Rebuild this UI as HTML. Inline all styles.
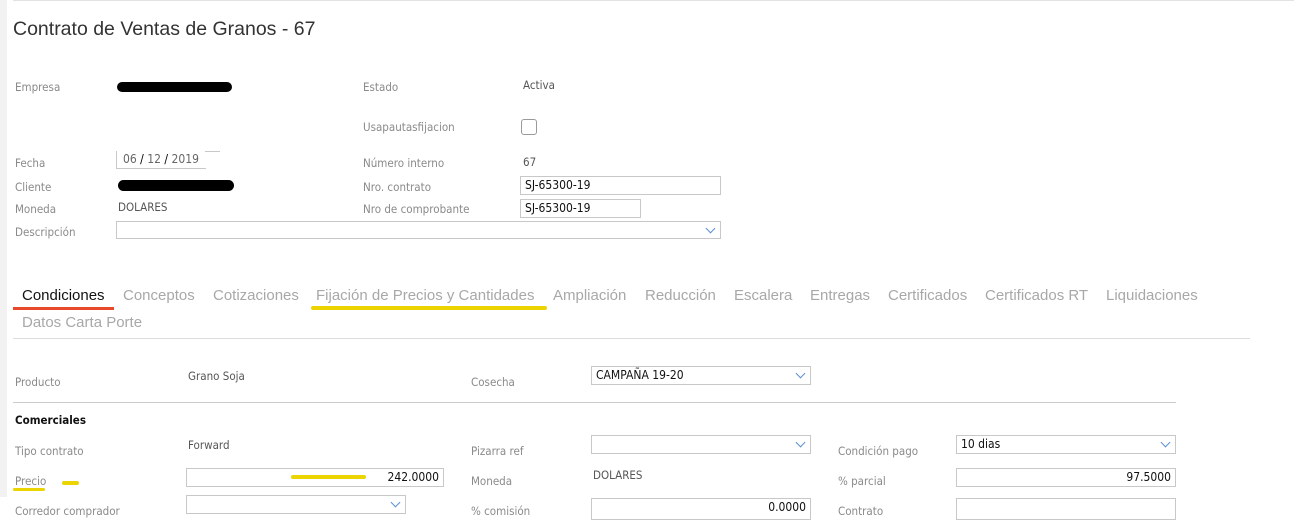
<!DOCTYPE html>
<html><head><meta charset="utf-8"><style>
*{margin:0;padding:0;box-sizing:border-box}
body{width:1294px;height:516px;overflow:hidden;background:#fff;position:relative;font-family:"DejaVu Sans Condensed","DejaVu Sans","Liberation Sans",sans-serif}
.a{position:absolute;white-space:nowrap}
.l{position:absolute;font-size:11.5px;color:#8a8a8a;white-space:nowrap}
.v{position:absolute;font-size:11.5px;color:#555;white-space:nowrap}
.i{position:absolute;border:1px solid #c8c8c8;background:#fff;font-size:12px;color:#111;padding:0 4px;line-height:16px}
.r{text-align:right}
.s::after{content:"";position:absolute;right:6px;top:3px;width:6px;height:6px;border-right:1px solid #5b8fd6;border-bottom:1px solid #5b8fd6;transform:rotate(45deg)}
.t{position:absolute;font-family:"Liberation Sans",sans-serif;font-size:15px;color:#a8a8a8;white-space:nowrap}
.blk{position:absolute;background:#000;border-radius:6px}
.y{position:absolute;background:#ecd400;border-radius:3px}
</style></head><body>
<div class="a" style="left:0;top:0;width:7px;height:497px;background:#f2f2f2"></div>
<div class="a" style="left:13px;top:0;width:1281px;height:1px;background:#e2e2e2"></div>
<div class="a" style="left:13px;top:18px;font-family:'Liberation Sans',sans-serif;font-size:19.5px;color:#333">Contrato de Ventas de Granos - 67</div>

<div class="l" style="left:15px;top:80px">Empresa</div>
<div class="blk" style="left:117px;top:82px;width:115px;height:10px"></div>
<div class="l" style="left:363px;top:80px">Estado</div>
<div class="v" style="left:523px;top:78px">Activa</div>
<div class="l" style="left:363px;top:120px">Usapautasfijacion</div>
<div class="a" style="left:521px;top:119px;width:16px;height:16px;border:1px solid #999;border-radius:3px"></div>
<div class="l" style="left:15px;top:156px">Fecha</div>
<div class="a" style="left:116px;top:151px;width:90px;height:18px;border-left:1px solid #c8c8c8;border-bottom:1px solid #c8c8c8;font-size:12px;color:#666;padding:1px 6px">06 <span style="color:#000">/</span> 12 <span style="color:#000">/</span> 2019</div>
<div class="a" style="left:205px;top:151px;width:15px;height:1px;background:#c8c8c8"></div>
<div class="l" style="left:363px;top:156px">Número interno</div>
<div class="v" style="left:523px;top:155px">67</div>
<div class="l" style="left:15px;top:180px">Cliente</div>
<div class="blk" style="left:118px;top:180px;width:116px;height:11px"></div>
<div class="l" style="left:363px;top:180px">Nro. contrato</div>
<div class="i" style="left:520px;top:176px;width:201px;height:19px">SJ-65300-19</div>
<div class="l" style="left:15px;top:202px">Moneda</div>
<div class="v" style="left:118px;top:200px">DOLARES</div>
<div class="l" style="left:363px;top:202px">Nro de comprobante</div>
<div class="i" style="left:520px;top:199px;width:121px;height:19px">SJ-65300-19</div>
<div class="l" style="left:15px;top:225px">Descripción</div>
<div class="i s" style="left:116px;top:221px;width:605px;height:18px"></div>

<div class="t" style="left:22px;top:287px;color:#111">Condiciones</div>
<div class="a" style="left:13px;top:307px;width:101px;height:3px;background:#e8492b"></div>
<div class="t" style="left:123px;top:287px">Conceptos</div>
<div class="t" style="left:213px;top:287px">Cotizaciones</div>
<div class="t" style="left:316px;top:287px">Fijación de Precios y Cantidades</div>
<div class="y" style="left:311px;top:306px;width:236px;height:4px"></div>
<div class="t" style="left:553px;top:287px">Ampliación</div>
<div class="t" style="left:645px;top:287px">Reducción</div>
<div class="t" style="left:734px;top:287px">Escalera</div>
<div class="t" style="left:810px;top:287px">Entregas</div>
<div class="t" style="left:888px;top:287px">Certificados</div>
<div class="t" style="left:985px;top:287px">Certificados RT</div>
<div class="t" style="left:1106px;top:287px">Liquidaciones</div>
<div class="t" style="left:22px;top:314px">Datos Carta Porte</div>
<div class="a" style="left:13px;top:338px;width:1237px;height:1px;background:#ddd"></div>

<div class="l" style="left:15px;top:375px">Producto</div>
<div class="v" style="left:188px;top:369px">Grano Soja</div>
<div class="l" style="left:471px;top:375px">Cosecha</div>
<div class="i s" style="left:591px;top:366px;width:220px;height:19px">CAMPAÑA 19-20</div>
<div class="a" style="left:13px;top:402px;width:1163px;height:1px;background:#ccc"></div>
<div class="a" style="left:15px;top:413px;font-size:11.5px;font-weight:bold;color:#111">Comerciales</div>

<div class="l" style="left:15px;top:444px">Tipo contrato</div>
<div class="v" style="left:188px;top:438px">Forward</div>
<div class="l" style="left:471px;top:444px">Pizarra ref</div>
<div class="i s" style="left:591px;top:435px;width:220px;height:19px"></div>
<div class="l" style="left:838px;top:444px">Condición pago</div>
<div class="i s" style="left:956px;top:435px;width:220px;height:19px">10 dias</div>

<div class="l" style="left:15px;top:474px">Precio</div>
<div class="y" style="left:13px;top:488px;width:32px;height:3px"></div>
<div class="y" style="left:62px;top:481px;width:17px;height:4px"></div>
<div class="i r" style="left:186px;top:468px;width:258px;height:19px">242.0000</div>
<div class="y" style="left:291px;top:475px;width:75px;height:4px"></div>
<div class="l" style="left:471px;top:474px">Moneda</div>
<div class="v" style="left:593px;top:468px">DOLARES</div>
<div class="l" style="left:838px;top:474px">% parcial</div>
<div class="i r" style="left:956px;top:468px;width:220px;height:19px">97.5000</div>

<div class="l" style="left:15px;top:504px">Corredor comprador</div>
<div class="i s" style="left:186px;top:495px;width:220px;height:19px"></div>
<div class="l" style="left:471px;top:504px">% comisión</div>
<div class="i r" style="left:591px;top:498px;width:220px;height:22px">0.0000</div>
<div class="l" style="left:838px;top:504px">Contrato</div>
<div class="i" style="left:956px;top:498px;width:220px;height:22px"></div>
</body></html>
